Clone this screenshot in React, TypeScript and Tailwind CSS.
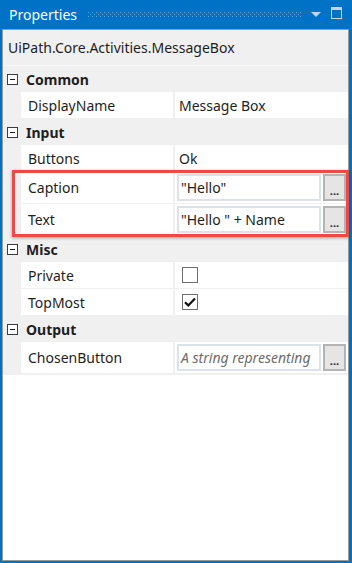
import React from 'react';

type Prop = {
  name: string;
  kind: 'text' | 'box' | 'check';
  value?: string;
  checked?: boolean;
  placeholder?: boolean;
};

type Category = { title: string; props: Prop[] };

const categories: Category[] = [
  { title: 'Common', props: [{ name: 'DisplayName', kind: 'text', value: 'Message Box' }] },
  {
    title: 'Input',
    props: [
      { name: 'Buttons', kind: 'text', value: 'Ok' },
      { name: 'Caption', kind: 'box', value: '"Hello"' },
      { name: 'Text', kind: 'box', value: '"Hello " + Name' },
    ],
  },
  {
    title: 'Misc',
    props: [
      { name: 'Private', kind: 'check', checked: false },
      { name: 'TopMost', kind: 'check', checked: true },
    ],
  },
  {
    title: 'Output',
    props: [{ name: 'ChosenButton', kind: 'box', value: 'A string representing', placeholder: true }],
  },
];

function MinusBox() {
  return (
    <div className="w-[11px] h-[11px] border border-[#3c3c3c] bg-white flex items-center justify-center">
      <div className="w-[5px] h-px bg-[#1e1e1e]" />
    </div>
  );
}

function EllipsisButton() {
  return (
    <div className="w-[23px] shrink-0 bg-[#e5e5e5] border-2 border-[#b4b4b4] flex items-end justify-center pb-[3px] text-[11px] leading-none text-[#222] font-bold">
      ...
    </div>
  );
}

function ValueCell({ p }: { p: Prop }) {
  if (p.kind === 'text') {
    return <div className="flex-1 bg-white pl-[4px] flex items-center">{p.value}</div>;
  }
  if (p.kind === 'check') {
    return (
      <div className="flex-1 bg-white pl-[7px] flex items-center">
        <div className="w-[16px] h-[16px] border border-[#6e6e6e] bg-white flex items-center justify-center">
          {p.checked && (
            <svg width="12" height="10" viewBox="0 0 12 10">
              <path d="M1 5.2 L4.3 8.4 L11 1.4" fill="none" stroke="#111" strokeWidth="2.2" />
            </svg>
          )}
        </div>
      </div>
    );
  }
  return (
    <div className="flex-1 bg-white flex py-[2px] pl-[2px] pr-[2px] gap-[2px] min-w-0">
      <div className="flex-1 min-w-0 border-2 border-[#dde2ea] bg-white pl-[2px] flex items-center overflow-hidden whitespace-nowrap">
        {p.placeholder ? <span className="italic text-[#6d6d6d]">{p.value}</span> : p.value}
      </div>
      <EllipsisButton />
    </div>
  );
}

export default function App() {
  return (
    <div className="relative w-[352px] h-[563px] bg-[#0072c6] pl-[2px] pr-[3px] pb-[2px] flex flex-col font-['Noto_Sans',sans-serif] text-[14px] text-[#1e1e1e]">
      {/* Title bar */}
      <div className="h-[29px] shrink-0 flex items-center pl-[7px] text-white text-[14px]">
        <span>Properties</span>
        <svg className="ml-[11px]" width="213" height="6" viewBox="0 0 213 6">
          <defs>
            <pattern id="dots" width="4" height="4" patternUnits="userSpaceOnUse">
              <rect x="0" y="0" width="1" height="1" fill="#5ea6e2" />
              <rect x="2" y="2" width="1" height="1" fill="#5ea6e2" />
            </pattern>
          </defs>
          <rect width="213" height="6" fill="url(#dots)" />
        </svg>
        <svg className="ml-[10px]" width="10" height="6" viewBox="0 0 10 6">
          <path d="M0 0 H10 L5 5 Z" fill="#b9d7f0" />
        </svg>
        <svg className="ml-[10px] mb-[3px]" width="11" height="12" viewBox="0 0 11 12">
          <rect x="0.5" y="0.5" width="10" height="11" fill="none" stroke="#b9d7f0" />
          <rect x="0" y="0" width="11" height="3" fill="#b9d7f0" />
        </svg>
      </div>

      {/* Content */}
      <div className="flex-1 flex flex-col border border-[#9a9a9a] bg-white">
        <div className="h-[36px] shrink-0 bg-[#f0f0f0] flex items-center pl-[5px] text-[14px] border-b border-[#f7f7f7]">
          UiPath.Core.Activities.MessageBox
        </div>
        <div className="bg-[#f0f0f0] pb-px">
          {categories.map((c) => (
            <div key={c.title}>
              <div className="h-[26px] flex items-center pl-[4px]">
                <MinusBox />
                <span className="ml-[8px] font-bold">{c.title}</span>
              </div>
              {c.props.map((p) => (
                <div key={p.name} className={`flex pl-[18px] mb-px ${p.kind === 'box' ? 'h-[31px]' : 'h-[26px]'}`}>
                  <div className="w-[152px] shrink-0 bg-white pl-[7px] flex items-center">{p.name}</div>
                  <div className="w-[2px] shrink-0" />
                  <ValueCell p={p} />
                </div>
              ))}
            </div>
          ))}
        </div>
        <div className="flex-1 bg-white" />
      </div>

      {/* Highlight */}
      <div className="absolute left-[12px] top-[170px] w-[337px] h-[67px] border-[3px] border-[#f04848] shadow-[0_1px_3px_rgba(0,0,0,0.35)]" />
    </div>
  );
}
